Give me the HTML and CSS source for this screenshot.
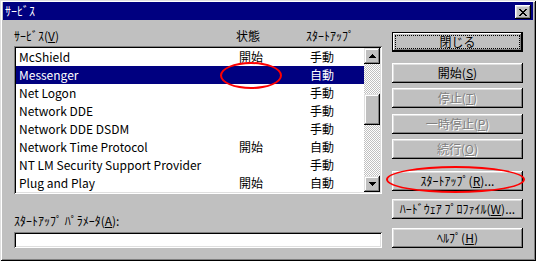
FILE: index.html
```html
<!DOCTYPE html>
<html lang="ja">
<head>
<meta charset="utf-8">
<link rel="stylesheet" href="styles.css">
</head>
<body>
<div class="win">
  <div class="titlebar">
    <span class="title">ｻｰﾋﾞｽ</span>
    <span class="xbtn"><svg width="8" height="7" viewBox="0 0 8 7"><path d="M0 0h2v1h1v1h2v-1h1v-1h2v1h-1v1h-1v1h-1v1h1v1h1v1h1v1h-2v-1h-1v-1h-2v1h-1v1h-2v-1h1v-1h1v-1h1v-1h-1v-1h-1v-1h-1z" fill="#000"/></svg></span>
  </div>
  <div class="content">
    <div class="left">
      <div class="headers">
        <span class="h-name">ｻｰﾋﾞｽ(<u>V</u>)</span>
        <span class="h-status">状態</span>
        <span class="h-start">ｽﾀｰﾄｱｯﾌﾟ</span>
      </div>
      <div class="listbox">
        <div class="rows">
          <div class="row"><span class="c-name">McShield</span><span class="c-status">開始</span><span class="c-start">手動</span></div>
          <div class="row sel"><span class="c-name">Messenger</span><span class="c-status"></span><span class="c-start">自動</span></div>
          <div class="row"><span class="c-name">Net Logon</span><span class="c-status"></span><span class="c-start">手動</span></div>
          <div class="row"><span class="c-name">Network DDE</span><span class="c-status"></span><span class="c-start">手動</span></div>
          <div class="row"><span class="c-name">Network DDE DSDM</span><span class="c-status"></span><span class="c-start">手動</span></div>
          <div class="row"><span class="c-name">Network Time Protocol</span><span class="c-status">開始</span><span class="c-start">自動</span></div>
          <div class="row"><span class="c-name">NT LM Security Support Provider</span><span class="c-status"></span><span class="c-start">手動</span></div>
          <div class="row"><span class="c-name">Plug and Play</span><span class="c-status">開始</span><span class="c-start">自動</span></div>
        </div>
        <div class="scrollbar">
          <div class="sb-btn"><svg width="7" height="4" viewBox="0 0 7 4"><path d="M3 0h1v1h1v1h1v1h1v1h-7v-1h1v-1h1v-1h1z" fill="#000"/></svg></div>
          <div class="track"><div class="thumb"></div></div>
          <div class="sb-btn"><svg width="7" height="4" viewBox="0 0 7 4"><path d="M0 0h7v1h-1v1h-1v1h-1v1h-1v-1h-1v-1h-1v-1h-1z" fill="#000"/></svg></div>
        </div>
      </div>
      <div class="param-label">ｽﾀｰﾄｱｯﾌﾟ ﾊﾟﾗﾒｰﾀ(<u>A</u>):</div>
      <div class="input"></div>
    </div>
    <div class="right">
      <div class="btn default b-close"><span class="focus">閉じる</span></div>
      <div class="btn b-start">開始(<u>S</u>)</div>
      <div class="btn dis b-stop">停止(<u>T</u>)</div>
      <div class="btn dis b-pause">一時停止(<u>P</u>)</div>
      <div class="btn dis b-cont">続行(<u>O</u>)</div>
      <div class="btn b-startup">ｽﾀｰﾄｱｯﾌﾟ(<u>R</u>)...</div>
      <div class="btn b-hw">ﾊｰﾄﾞｳｪｱ ﾌﾟﾛﾌｧｲﾙ(<u>W</u>)...</div>
      <div class="btn b-help">ﾍﾙﾌﾟ(<u>H</u>)</div>
    </div>
  </div>
  <div class="ellipse e1"></div>
  <div class="ellipse e2"></div>
</div>
</body>
</html>
```

FILE: styles.css
```css
* { box-sizing: border-box; }
html, body { margin: 0; padding: 0; }
body {
  width: 536px;
  height: 261px;
  overflow: hidden;
  background: #c0c0c0;
  font-family: "Noto Sans CJK JP", "Liberation Sans", sans-serif;
  font-size: 12px;
  color: #000;
}
u { text-decoration: underline; text-underline-offset: 1px; }
.win {
  position: relative;
  width: 536px;
  height: 261px;
  background: #c0c0c0;
  padding: 2px 3px 3px 3px;
  box-shadow: inset 1px 1px 0 #dfdfdf, inset -1px -1px 0 #000, inset 2px 2px 0 #fff, inset -2px -2px 0 #808080;
  display: flex;
  flex-direction: column;
}
.titlebar {
  height: 18px;
  background: #000080;
  color: #fff;
  display: flex;
  align-items: center;
  justify-content: space-between;
  padding: 0 2px 0 2px;
}
.title { line-height: 18px; }
.xbtn {
  width: 16px;
  height: 14px;
  background: #c0c0c0;
  box-shadow: inset -1px -1px 0 #000, inset 1px 1px 0 #fff, inset -2px -2px 0 #808080, inset 2px 2px 0 #dfdfdf;
  display: flex;
  align-items: center;
  justify-content: center;
  margin-top: 2px;
}
.content {
  display: flex;
  padding-left: 11px;
}
.left { width: 368px; display: flex; flex-direction: column; }
.headers {
  display: flex;
  height: 14px;
  line-height: 14px;
  margin-top: 9px;
  margin-bottom: 3px;
}
.h-name { width: 222px; }
.h-status { width: 70px; }
.listbox {
  height: 148px;
  padding: 2px;
  background: #fff;
  box-shadow: inset 1px 1px 0 #808080, inset -1px -1px 0 #fff, inset 2px 2px 0 #000, inset -2px -2px 0 #dfdfdf;
  display: flex;
}
.rows { flex: 1; }
.row {
  display: flex;
  height: 18px;
  line-height: 18px;
  padding-left: 3px;
}
.row.sel { background: #000080; color: #fff; }
.c-name { width: 220px; white-space: nowrap; }
.c-status { width: 71px; }
.scrollbar {
  width: 16px;
  display: flex;
  flex-direction: column;
}
.sb-btn {
  height: 16px;
  background: #c0c0c0;
  box-shadow: inset -1px -1px 0 #000, inset 1px 1px 0 #dfdfdf, inset -2px -2px 0 #808080, inset 2px 2px 0 #fff;
  display: flex;
  align-items: center;
  justify-content: center;
}
.track {
  flex: 1;
  background-color: #c0c0c0;
  background-image: conic-gradient(#fff 25%, #c0c0c0 0 50%, #fff 0 75%, #c0c0c0 0);
  background-size: 2px 2px;
}
.thumb {
  height: 31px;
  margin-top: 30px;
  background: #c0c0c0;
  box-shadow: inset -1px -1px 0 #000, inset 1px 1px 0 #dfdfdf, inset -2px -2px 0 #808080, inset 2px 2px 0 #fff;
}
.param-label {
  margin-top: 20px;
  line-height: 14px;
  height: 14px;
}
.input {
  margin-top: 4px;
  height: 16px;
  background: #fff;
  box-shadow: inset 1px 1px 0 #808080, inset -1px -1px 0 #fff, inset 2px 2px 0 #000, inset -2px -2px 0 #dfdfdf;
}
.right {
  margin-left: 10px;
  width: 131px;
  display: flex;
  flex-direction: column;
}
.btn {
  height: 20px;
  line-height: 20px;
  text-align: center;
  background: #c0c0c0;
  white-space: nowrap;
  box-shadow: inset -1px -1px 0 #000, inset 1px 1px 0 #fff, inset -2px -2px 0 #808080, inset 2px 2px 0 #dfdfdf;
}
.btn.default {
  box-shadow: inset 0 0 0 1px #000, inset -2px -2px 0 #000, inset 2px 2px 0 #fff, inset -3px -3px 0 #808080;
  padding: 4px;
  line-height: 12px;
}
.focus {
  display: block;
  height: 12px;
  line-height: 12px;
  outline: 1px dotted #000;
}
.btn.dis { color: #808080; text-shadow: 1px 1px 0 #fff; }
.b-close { margin-top: 12px; }
.b-start { margin-top: 11px; }
.b-stop { margin-top: 5px; }
.b-pause { margin-top: 6px; }
.b-cont { margin-top: 5px; }
.b-startup { margin-top: 12px; }
.b-hw { margin-top: 8px; }
.b-help { margin-top: 9px; }
.ellipse {
  position: absolute;
  border: 2px solid #f00;
  border-radius: 50%;
}
.e1 { left: 220px; top: 62px; width: 62px; height: 27px; }
.e2 { left: 386px; top: 166px; width: 139px; height: 27px; }
```
